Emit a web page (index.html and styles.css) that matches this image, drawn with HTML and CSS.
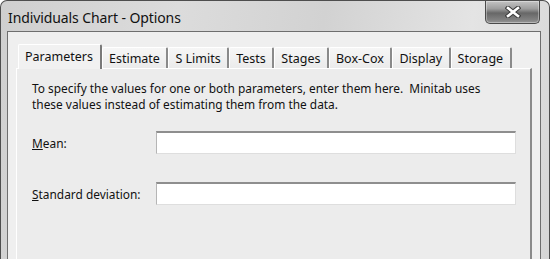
FILE: index.html
```html
<!DOCTYPE html>
<html>
<head>
<meta charset="utf-8">
<link rel="stylesheet" href="styles.css">
</head>
<body>
<div class="window">
  <div class="titlebar">
    <span class="title">Individuals Chart - Options</span>
    <div class="close">
      <svg width="16" height="12" viewBox="0 0 16 12">
        <path d="M3 2 L13 10 M13 2 L3 10" stroke="#3a3a3a" stroke-width="4.6" stroke-linecap="square"/>
        <path d="M3 2 L13 10 M13 2 L3 10" stroke="#ffffff" stroke-width="2.6" stroke-linecap="square"/>
      </svg>
    </div>
  </div>
  <div class="client">
    <div class="tabs">
      <div class="tab selected">Parameters</div>
      <div class="tab">Estimate</div>
      <div class="tab">S Limits</div>
      <div class="tab">Tests</div>
      <div class="tab">Stages</div>
      <div class="tab">Box-Cox</div>
      <div class="tab">Display</div>
      <div class="tab">Storage</div>
    </div>
    <div class="panel">
      <p class="intro">To specify the values for one or both parameters, enter them here.&nbsp; Minitab uses these values instead of estimating them from the data.</p>
      <div class="row row-mean">
        <label class="label"><u>M</u>ean:</label>
        <div class="input"></div>
      </div>
      <div class="row row-sd">
        <label class="label"><u>S</u>tandard deviation:</label>
        <div class="input"></div>
      </div>
    </div>
  </div>
</div>
</body>
</html>
```
FILE: styles.css
```css
html, body {
  margin: 0;
  padding: 0;
  width: 550px;
  height: 259px;
  overflow: hidden;
  background: #ffffff;
}

.window {
  box-sizing: border-box;
  width: 550px;
  height: 259px;
  border: 1px solid #4e4e4e;
  border-bottom: none;
  border-radius: 7px 7px 0 0;
  padding: 0 8px 0 6px;
  background: linear-gradient(100deg, #cfcfcf 0%, #dcdcdc 30%, #d2d2d2 55%, #e4e4e4 80%, #d6d6d6 100%);
  display: flex;
  flex-direction: column;
  font-family: "Noto Sans", "Open Sans", sans-serif;
}

.titlebar {
  height: 30px;
  flex: none;
  display: flex;
  align-items: flex-start;
}

.title {
  font-size: 14px;
  color: #111;
  margin-top: 7px;
  margin-left: 1px;
  letter-spacing: -0.1px;
}

.close {
  margin-left: auto;
  margin-right: 1px;
  width: 55px;
  height: 23px;
  box-sizing: border-box;
  border: 1px solid #4a4a4a;
  border-top: none;
  border-radius: 0 0 5px 5px;
  background: linear-gradient(#c4c4c4 0%, #9e9e9e 35%, #676767 55%, #818181 85%, #969696 100%);
  box-shadow: inset 0 0 0 1px rgba(255,255,255,0.35);
  display: flex;
  align-items: center;
  justify-content: center;
}

.client {
  flex: 1;
  border: 1px solid #6e6e6e;
  border-bottom: none;
  background: #efefef;
  padding: 12px 8px 0 8px;
  display: flex;
  flex-direction: column;
}

.tabs {
  display: flex;
  align-items: flex-end;
  height: 24px;
  flex: none;
  padding-left: 2px;
  position: relative;
  z-index: 1;
}

.tab {
  box-sizing: border-box;
  height: 21px;
  padding: 1px 6.5px 0 6px;
  font-size: 12.5px;
  color: #111;
  background: linear-gradient(#f6f6f6, #ebebeb);
  border-top: 1px solid #ffffff;
  border-left: 1px solid #ffffff;
  border-right: 2px solid #8a8a8a;
  border-radius: 2px 2px 0 0;
  line-height: 19px;
  white-space: nowrap;
}

.tab.selected {
  height: 25px;
  margin-bottom: -1px;
  padding: 2px 7px 0 6px;
  background: #f1f1f1;
  border-right: 2px solid #7a7a7a;
}

.panel {
  flex: 1;
  border-top: 1px solid #ffffff;
  border-left: 1px solid #ffffff;
  border-right: 2px solid #8a8a8a;
  background: #ececec;
  padding: 11px 12px 0 15px;
  color: #111;
  font-size: 11.9px;
}

.intro {
  margin: 0;
  line-height: 16px;
  width: 480px;
}

.row {
  display: flex;
  align-items: center;
}

.row-mean {
  margin-top: 19px;
}

.row-sd {
  margin-top: 28px;
}

.label {
  width: 124px;
  flex: none;
}

.input {
  box-sizing: border-box;
  width: 360px;
  height: 23px;
  background: #ffffff;
  border: 1px solid #dedede;
  border-top: 2px solid #8e8e8e;
  border-left: 1px solid #b5b5b5;
}
```
